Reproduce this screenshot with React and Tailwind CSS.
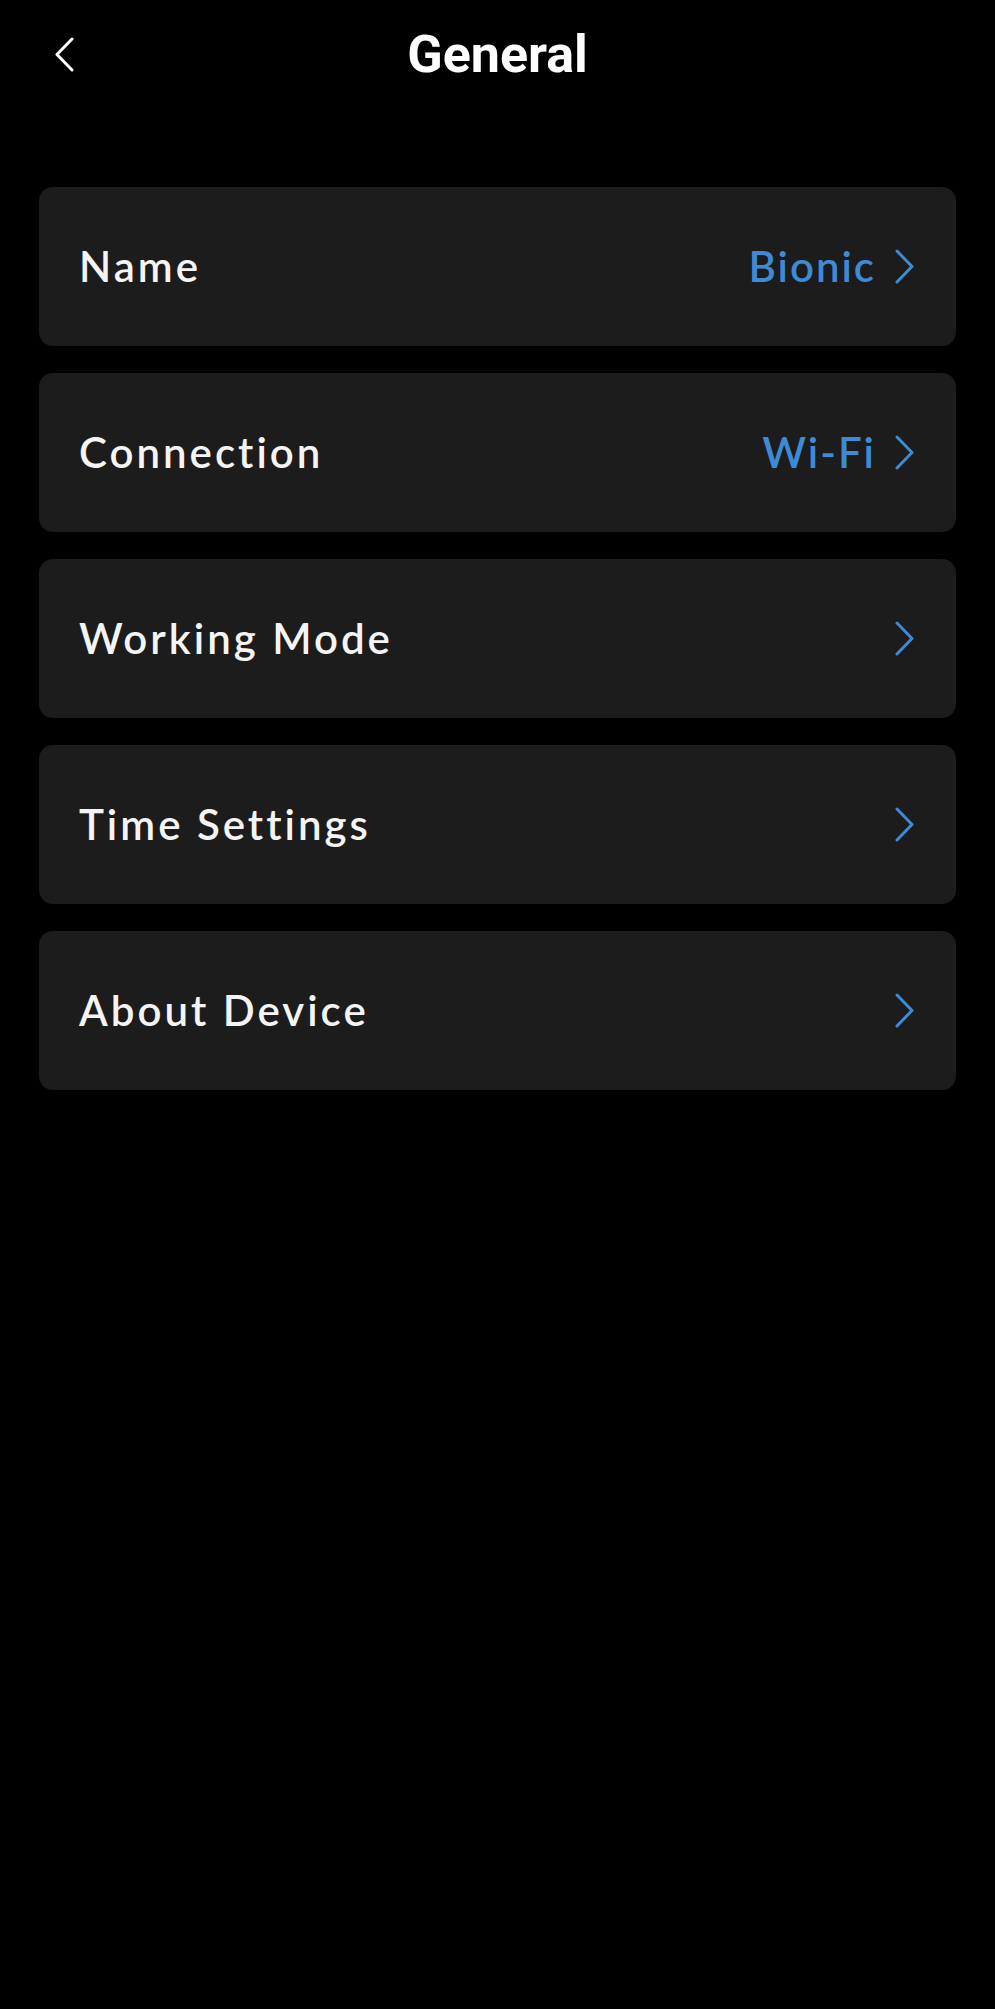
const ITEMS = [
  { label: "Name", value: "Bionic" },
  { label: "Connection", value: "Wi-Fi" },
  { label: "Working Mode" },
  { label: "Time Settings" },
  { label: "About Device" },
];

export default function App() {
  return (
    <div className="min-h-[2009px] w-full bg-black text-white">
      <header className="grid h-[109px] grid-cols-[1fr_auto_1fr] items-center px-[55px]">
        <button type="button" className="flex w-fit items-center" aria-label="Back">
          <Chevron dir="left" className="h-[35px] w-[19px] text-white" />
        </button>
        <h1 className="font-['Roboto',sans-serif] text-[52px] font-bold leading-none">
          General
        </h1>
        <div />
      </header>

      <div className="flex flex-col gap-[27px] px-[39px] pt-[78px]">
        {ITEMS.map((item) => (
          <Row key={item.label} {...item} />
        ))}
      </div>
    </div>
  );
}

function Row({ label, value }) {
  return (
    <div className="flex h-[159px] items-center justify-between rounded-[14px] bg-[#1c1c1c] pl-[40px] pr-[42px] font-['Lato',sans-serif] text-[42px] font-semibold">
      <span className="tracking-[3px] text-[#f4f4f4]">{label}</span>
      <span className="flex items-center gap-[19px] text-[#3f8ad4]">
        {value && <span className="tracking-[2px]">{value}</span>}
        <Chevron dir="right" className="h-[35px] w-[19px] text-[#3f8ad4]" />
      </span>
    </div>
  );
}

function Chevron({ dir, className }) {
  const pts = dir === "left" ? "17,2 2,17.5 17,33" : "2,2 17,17.5 2,33";
  return (
    <svg viewBox="0 0 19 35" className={className} fill="none" stroke="currentColor" strokeWidth={3} strokeLinecap="round" strokeLinejoin="round">
      <polyline points={pts} />
    </svg>
  );
}
